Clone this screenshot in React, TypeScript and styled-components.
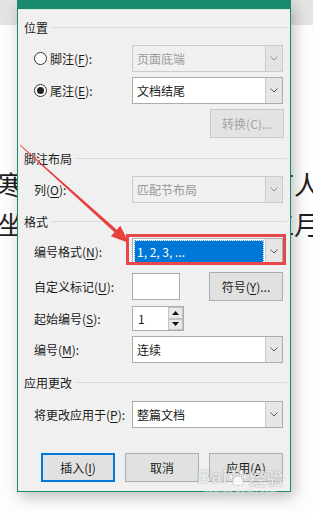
import React from "react";
import styled, { createGlobalStyle, css } from "styled-components";

const GlobalStyle = createGlobalStyle`
  html, body { margin: 0; padding: 0; }
  body {
    width: 313px;
    height: 513px;
    overflow: hidden;
    background: #fdfdfd;
    font-family: "Noto Sans CJK SC", "Noto Sans", sans-serif;
  }
`;

const Page = styled.div`
  position: relative;
  width: 313px;
  height: 513px;
  overflow: hidden;
  background: #fdfdfd;
`;

const Ribbon = styled.div`
  height: 25px;
  background: #e4e4e4;
`;

const DocBody = styled.div`
  display: flex;
  flex-direction: column;
  padding-top: 139px;
`;

const DocLine = styled.div`
  display: flex;
  justify-content: space-between;
  height: 40px;
  line-height: 40px;
  margin: 0 -7px 0 -2px;
  font-family: "Noto Sans CJK SC", sans-serif;
  font-size: 26px;
  color: #1e1e1e;
  white-space: nowrap;
`;

const Dialog = styled.div`
  position: absolute;
  left: 17px;
  top: 0;
  width: 274px;
  height: 492px;
  box-sizing: border-box;
  border: 1px solid #1a8a6f;
  border-top: none;
  background: #f0f0f0;
  box-shadow: 3px 5px 14px rgba(0, 0, 0, 0.25);
  display: flex;
  flex-direction: column;
  font-family: "Noto Sans CJK SC", "Noto Sans", sans-serif;
  font-size: 12px;
  color: #1b1b1b;
`;

const TitleBar = styled.div`
  height: 9px;
  flex: none;
  background: #1a8a6f;
  border-bottom: 1px solid #d6ece5;
`;

const Content = styled.div`
  display: flex;
  flex-direction: column;
`;

const GroupHeading = styled.div<{ $mt: number }>`
  display: flex;
  align-items: center;
  height: 16px;
  line-height: 16px;
  margin-top: ${(p) => p.$mt}px;
  padding: 0 3px 0 6px;
  white-space: nowrap;
  &::after {
    content: "";
    flex: 1;
    height: 1px;
    margin: -2px 0 0 4px;
    background: #dadada;
  }
`;

const FieldRow = styled.div<{ $mt: number; $h: number }>`
  display: grid;
  grid-template-columns: 98px 151px;
  align-items: center;
  height: ${(p) => p.$h}px;
  margin-top: ${(p) => p.$mt}px;
  padding-left: 16px;
`;

const MarkRow = styled(FieldRow)`
  grid-template-columns: 98px 48px 103px;
`;

const RightRow = styled.div<{ $mt: number }>`
  display: flex;
  justify-content: flex-end;
  margin-top: ${(p) => p.$mt}px;
  padding-right: 6px;
`;

const ButtonRow = styled.div<{ $mt: number }>`
  display: flex;
  gap: 10px;
  margin-top: ${(p) => p.$mt}px;
  padding-left: 23px;
`;

const Label = styled.span`
  white-space: nowrap;
  line-height: 16px;
  u {
    text-decoration: underline;
    text-underline-offset: 2px;
  }
`;

const RadioLabel = styled.label`
  display: flex;
  align-items: center;
  gap: 3px;
  white-space: nowrap;
`;

const Radio = styled.span<{ $checked?: boolean }>`
  width: 13px;
  height: 13px;
  box-sizing: border-box;
  border: 1px solid #333;
  border-radius: 50%;
  background: #fff;
  display: flex;
  align-items: center;
  justify-content: center;
  &::after {
    content: "";
    width: 7px;
    height: 7px;
    border-radius: 50%;
    background: ${(p) => (p.$checked ? "#222" : "transparent")};
  }
`;

const Combo = styled.div<{ $disabled?: boolean }>`
  display: flex;
  height: 100%;
  box-sizing: border-box;
  border: 1px solid ${(p) => (p.$disabled ? "#cccccc" : "#acacac")};
  background: ${(p) => (p.$disabled ? "#f0f0f0" : "#ffffff")};
`;

const ComboValue = styled.div<{ $disabled?: boolean; $selected?: boolean }>`
  flex: 1;
  display: flex;
  align-items: center;
  padding-left: 4px;
  color: ${(p) => (p.$disabled ? "#9a9a9a" : "#1b1b1b")};
  white-space: nowrap;
  ${(p) =>
    p.$selected &&
    css`
      margin: 2px;
      padding-left: 2px;
      background: #0078d7;
      color: #ffffff;
      outline: 1px dotted #6aa8e0;
    `}
`;

const ComboButton = styled.div<{ $disabled?: boolean }>`
  width: 16px;
  flex: none;
  display: flex;
  align-items: center;
  justify-content: center;
  border-left: 1px solid #cccccc;
  background: ${(p) => (p.$disabled ? "#e3e3e3" : "#e6e6e6")};
`;

const TextBox = styled.div`
  width: 48px;
  height: 27px;
  box-sizing: border-box;
  border: 1px solid #acacac;
  background: #fff;
`;

const Spin = styled.div`
  width: 52px;
  height: 25px;
  box-sizing: border-box;
  border: 1px solid #acacac;
  background: #fff;
  display: flex;
`;

const SpinValue = styled.div`
  flex: 1;
  display: flex;
  align-items: center;
  padding-left: 5px;
`;

const SpinButtons = styled.div`
  width: 15px;
  display: flex;
  flex-direction: column;
`;

const SpinButton = styled.div`
  flex: 1;
  box-sizing: border-box;
  border: 1px solid #c4c4c4;
  background: #e8e8e8;
  display: flex;
  align-items: center;
  justify-content: center;
`;

const PushButton = styled.button<{ $default?: boolean }>`
  width: 74px;
  height: 29px;
  box-sizing: border-box;
  padding: 0;
  font-family: inherit;
  font-size: 12px;
  color: #1b1b1b;
  background: #e1e1e1;
  border: 1px solid #adadad;
  justify-self: end;
  u {
    text-underline-offset: 2px;
  }
  ${(p) =>
    p.$default &&
    css`
      border: 2px solid #0078d7;
    `}
  &:disabled {
    background: #e3e3e3;
    border-color: #cacaca;
    color: #a3a3a3;
  }
`;

const Overlay = styled.svg`
  position: absolute;
  left: 0;
  top: 0;
  pointer-events: none;
`;

const Highlight = styled.div`
  position: absolute;
  left: 126px;
  top: 234px;
  width: 160px;
  height: 31px;
  box-sizing: border-box;
  border: 3px solid #e8484a;
`;

const Watermark = styled.div`
  position: absolute;
  left: 193px;
  top: 466px;
  width: 95px;
  display: flex;
  flex-direction: column;
  align-items: center;
  color: rgba(255, 255, 255, 0.8);
  text-shadow: 0 0 1px rgba(0, 0, 0, 0.3), 0 0 2px rgba(0, 0, 0, 0.15);
  pointer-events: none;
`;

const WatermarkBrand = styled.div`
  display: flex;
  align-items: center;
  height: 22px;
  font-family: "Liberation Sans", Arial, sans-serif;
  font-size: 19px;
  font-weight: bold;
  letter-spacing: 0.5px;
`;

const WatermarkCn = styled.span`
  font-family: "Noto Sans CJK SC", sans-serif;
  font-size: 17px;
  font-weight: bold;
  margin-left: 1px;
`;

const WatermarkUrl = styled.div`
  font-family: "Liberation Sans", Arial, sans-serif;
  font-size: 9px;
  line-height: 11px;
  color: rgba(215, 215, 215, 0.9);
  text-shadow: none;
`;

const Chevron = ({ color = "#606060" }: { color?: string }) => (
  <svg width="8" height="5" viewBox="0 0 8 5">
    <polyline points="0.5,0.5 4,4 7.5,0.5" fill="none" stroke={color} strokeWidth="1" />
  </svg>
);

const Tri = ({ up }: { up?: boolean }) => (
  <svg width="7" height="4" viewBox="0 0 7 4">
    <polygon points={up ? "0,4 3.5,0 7,4" : "0,0 3.5,4 7,0"} fill="#111" />
  </svg>
);

type ComboProps = { value: string; disabled?: boolean; selected?: boolean };

const ComboBox = ({ value, disabled, selected }: ComboProps) => (
  <Combo $disabled={disabled}>
    <ComboValue $disabled={disabled} $selected={selected}>
      {value}
    </ComboValue>
    <ComboButton $disabled={disabled}>
      <Chevron color={disabled ? "#8a8a8a" : "#555"} />
    </ComboButton>
  </Combo>
);

export default function App() {
  return (
    <>
      <GlobalStyle />
      <Page>
        <Ribbon />
        <DocBody>
          <DocLine>
            <span>寒</span>
            <span>丁人</span>
          </DocLine>
          <DocLine>
            <span>坐</span>
            <span>工月</span>
          </DocLine>
        </DocBody>

        <Dialog>
          <TitleBar />
          <Content>
            <GroupHeading $mt={10}>位置</GroupHeading>
            <FieldRow $mt={9} $h={27}>
              <RadioLabel>
                <Radio />
                <Label>
                  脚注(<u>F</u>):
                </Label>
              </RadioLabel>
              <ComboBox value="页面底端" disabled />
            </FieldRow>
            <FieldRow $mt={5} $h={27}>
              <RadioLabel>
                <Radio $checked />
                <Label>
                  尾注(<u>E</u>):
                </Label>
              </RadioLabel>
              <ComboBox value="文档结尾" />
            </FieldRow>
            <RightRow $mt={5}>
              <PushButton disabled>转换(C)...</PushButton>
            </RightRow>

            <GroupHeading $mt={13}>脚注布局</GroupHeading>
            <FieldRow $mt={9} $h={27}>
              <Label>
                列(<u>O</u>):
              </Label>
              <ComboBox value="匹配节布局" disabled />
            </FieldRow>

            <GroupHeading $mt={11}>格式</GroupHeading>
            <FieldRow $mt={8} $h={27}>
              <Label>
                编号格式(<u>N</u>):
              </Label>
              <ComboBox value="1, 2, 3, ..." selected />
            </FieldRow>
            <MarkRow $mt={7} $h={29}>
              <Label>
                自定义标记(<u>U</u>):
              </Label>
              <TextBox />
              <PushButton>
                符号(<u>Y</u>)...
              </PushButton>
            </MarkRow>
            <FieldRow $mt={5} $h={25}>
              <Label>
                起始编号(<u>S</u>):
              </Label>
              <Spin>
                <SpinValue>1</SpinValue>
                <SpinButtons>
                  <SpinButton>
                    <Tri up />
                  </SpinButton>
                  <SpinButton>
                    <Tri />
                  </SpinButton>
                </SpinButtons>
              </Spin>
            </FieldRow>
            <FieldRow $mt={5} $h={27}>
              <Label>
                编号(<u>M</u>):
              </Label>
              <ComboBox value="连续" />
            </FieldRow>

            <GroupHeading $mt={12}>应用更改</GroupHeading>
            <FieldRow $mt={10} $h={27}>
              <Label>
                将更改应用于(<u>P</u>):
              </Label>
              <ComboBox value="整篇文档" />
            </FieldRow>

            <ButtonRow $mt={25}>
              <PushButton $default>
                插入(<u>I</u>)
              </PushButton>
              <PushButton>取消</PushButton>
              <PushButton>
                应用(<u>A</u>)
              </PushButton>
            </ButtonRow>
          </Content>
        </Dialog>

        <Highlight />

        <Overlay width="313" height="513" viewBox="0 0 313 513">
          <polygon
            points="20.33,144.63 116.77,229.7 120.3,225.8 129,243 110.9,236.2 114.43,232.3 19.67,145.37"
            fill="#e8413c"
          />
        </Overlay>

        <Watermark>
          <WatermarkBrand>
            Bai
            <svg width="20" height="20" viewBox="0 0 20 20">
              <g fill="rgba(255,255,255,0.8)" stroke="rgba(0,0,0,0.22)" strokeWidth="0.6">
                <ellipse cx="6" cy="5" rx="2" ry="2.6" />
                <ellipse cx="13" cy="5" rx="2" ry="2.6" />
                <ellipse cx="3" cy="10" rx="1.8" ry="2.3" />
                <ellipse cx="17" cy="10" rx="1.8" ry="2.3" />
                <path d="M10 9 C6 9 4 14 5 17 C7 19 13 19 15 17 C16 14 14 9 10 9 Z" />
              </g>
            </svg>
            <WatermarkCn>经验</WatermarkCn>
          </WatermarkBrand>
          <WatermarkUrl>jingyan.baidu.com</WatermarkUrl>
        </Watermark>
      </Page>
    </>
  );
}
